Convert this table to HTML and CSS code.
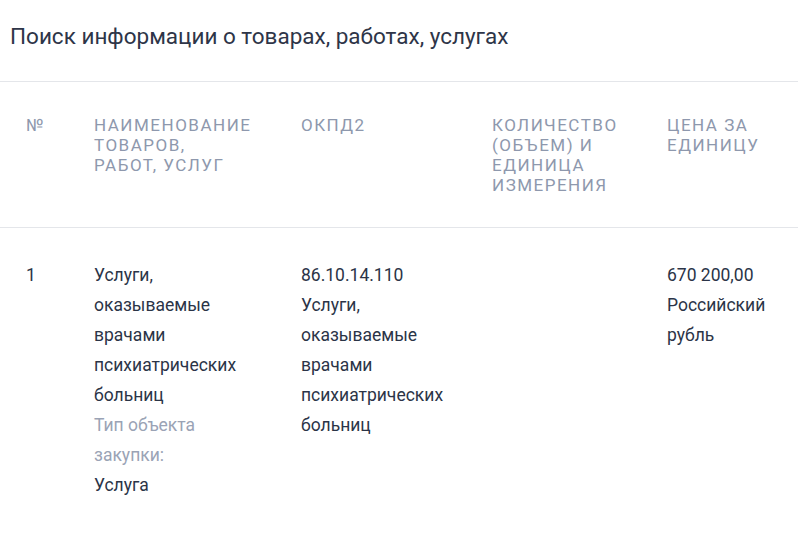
FILE: index.html
```html
<!DOCTYPE html>
<html lang="ru">
<head>
<meta charset="utf-8">
<link rel="stylesheet" href="styles.css">
</head>
<body>
<div class="page">
  <h1 class="title">Поиск информации о товарах, работах, услугах</h1>
  <div class="table">
    <div class="row head">
      <div class="cell c-num">№</div>
      <div class="cell c-name">Наименование товаров, работ, услуг</div>
      <div class="cell c-okpd">ОКПД2</div>
      <div class="cell c-qty">Количество (объем) и единица измерения</div>
      <div class="cell c-price">Цена за единицу</div>
    </div>
    <div class="row body">
      <div class="cell c-num">1</div>
      <div class="cell c-name">
        <div>Услуги, оказываемые врачами психиатрических больниц</div>
        <div class="muted">Тип объекта закупки:</div>
        <div>Услуга</div>
      </div>
      <div class="cell c-okpd">
        <div>86.10.14.110</div>
        <div>Услуги, оказываемые врачами психиатрических больниц</div>
      </div>
      <div class="cell c-qty"></div>
      <div class="cell c-price">
        <div>670 200,00</div>
        <div>Российский рубль</div>
      </div>
    </div>
  </div>
</div>
</body>
</html>
```

FILE: styles.css
```css
html, body {
  margin: 0;
  padding: 0;
  background: #ffffff;
}
body {
  font-family: Roboto, "Noto Sans", sans-serif;
  color: #2b3447;
}
.page {
  width: 798px;
}
.title {
  margin: 0;
  padding: 21px 10px 30px;
  font-size: 22.5px;
  line-height: 30px;
  font-weight: 400;
  color: #2e3548;
  border-bottom: 1px solid #e4e6ea;
}
.row {
  display: grid;
  grid-template-columns: 68px 207px 191px 175px 1fr;
  padding-left: 26px;
}
.head {
  padding-top: 33px;
  padding-bottom: 32px;
  border-bottom: 1px solid #e4e6ea;
  font-size: 17px;
  line-height: 20px;
  text-transform: uppercase;
  letter-spacing: 1.5px;
  color: #8e98ad;
}
.body {
  padding-top: 32px;
  font-size: 17.5px;
  line-height: 30px;
  color: #2b3447;
}
.c-name { padding-right: 50px; }
.c-okpd { padding-right: 36px; }
.c-qty { padding-right: 15px; }
.muted { color: #9aa3b5; }
```
